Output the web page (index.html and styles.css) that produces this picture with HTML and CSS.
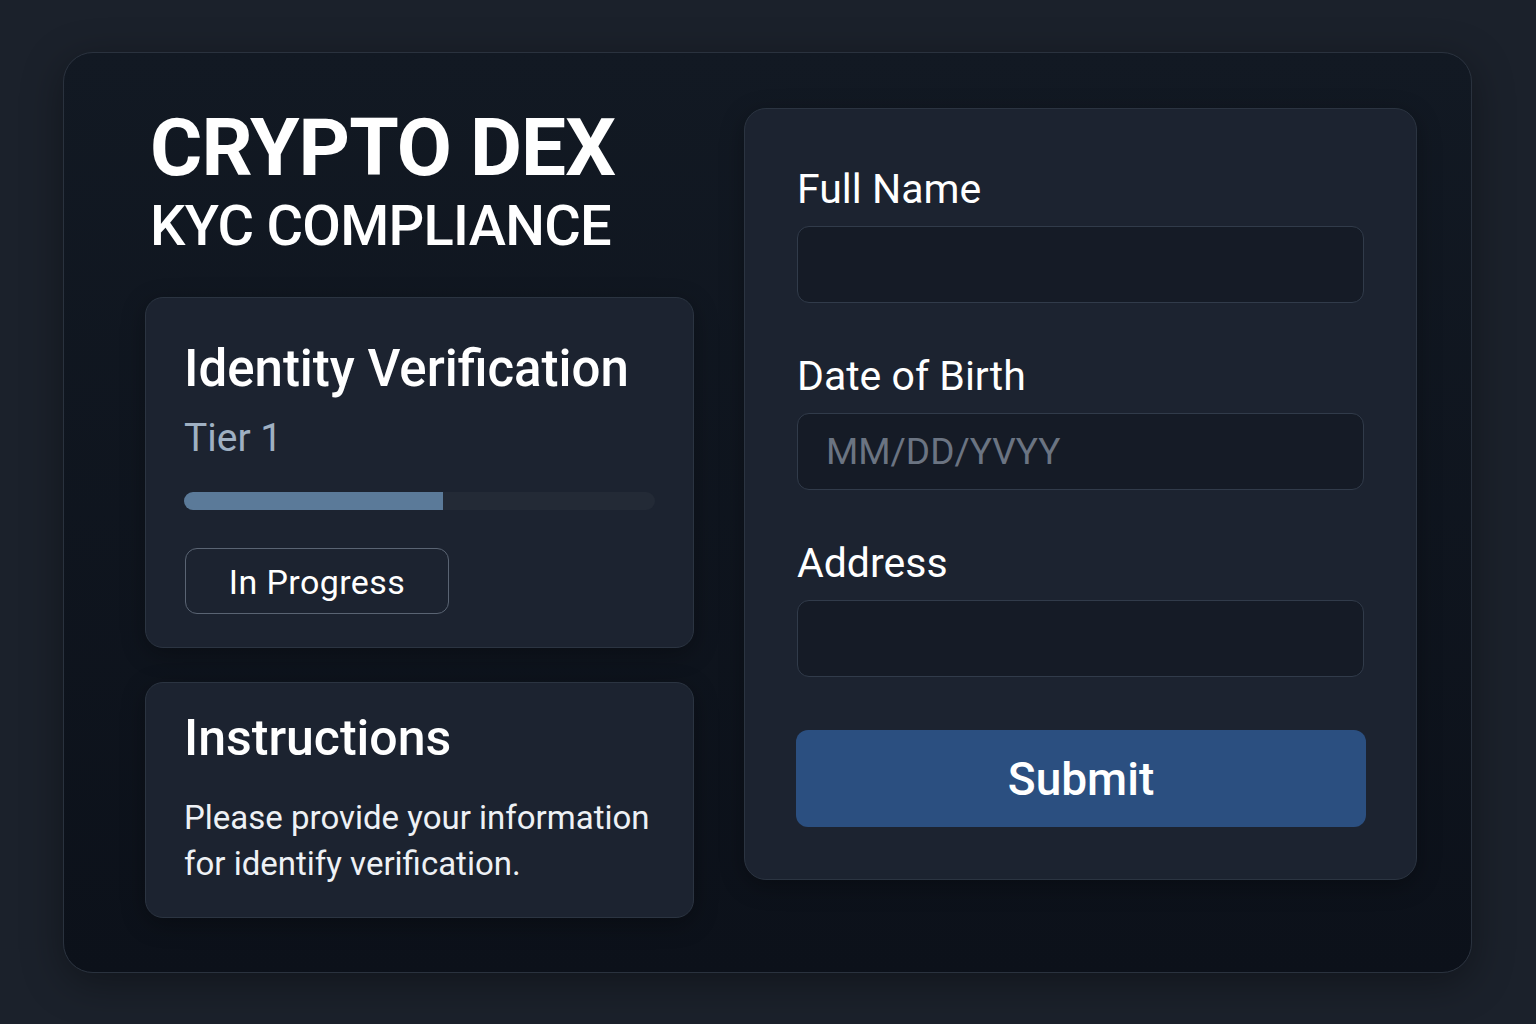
FILE: index.html
```html
<!DOCTYPE html>
<html lang="en">
<head>
  <meta charset="UTF-8" />
  <title>Crypto DEX - KYC Compliance</title>
  <link rel="stylesheet" href="styles.css">
</head>
<body>

  <div class="shell">
    <!-- Left column: brand + status cards -->
    <div class="side">
      <div class="brand">
        <h1>CRYPTO DEX</h1>
        <h2>KYC COMPLIANCE</h2>
      </div>

      <div class="card status-card">
        <h3>Identity Verification</h3>
        <p class="tier">Tier 1</p>
        <div class="progress">
          <div class="progress-fill" style="width: 55%"></div>
        </div>
        <span class="badge">In Progress</span>
      </div>

      <div class="card info-card">
        <h3>Instructions</h3>
        <p>Please provide your information for identify verification.</p>
      </div>
    </div>

    <!-- Right column: form -->
    <form class="card kyc-form" id="kycForm">
      <div class="form-group">
        <label for="fullname">Full Name</label>
        <input type="text" id="fullname" />
      </div>

      <div class="form-group">
        <label for="dob">Date of Birth</label>
        <input type="text" id="dob" placeholder="MM/DD/YVYY" />
      </div>

      <div class="form-group">
        <label for="address">Address</label>
        <input type="text" id="address" />
      </div>

      <button type="submit">Submit</button>
    </form>
  </div>

  <script>
    document.getElementById('kycForm').addEventListener('submit', function(e) {
      e.preventDefault();
    });
  </script>

</body>
</html>
```

FILE: styles.css
```css
body {
  margin: 0;
  font-family: Roboto, 'Noto Sans', sans-serif;
  background: #1b212b;
  color: #fff;
  height: 100vh;
  padding: 52px 64px 0 63px;
  box-sizing: border-box;
}

.shell {
  display: flex;
  gap: 50px;
  height: 921px;
  box-sizing: border-box;
  padding: 48px 54px 0 82px;
  background: linear-gradient(180deg, #121923 0%, #0c111a 100%);
  border: 1px solid #2a323e;
  border-radius: 30px;
  box-shadow: 0 10px 40px rgba(0, 0, 0, 0.35);
}

.side {
  width: 549px;
  display: flex;
  flex-direction: column;
}

.brand {
  padding-left: 4px;
  margin-bottom: 40px;
}

h1 {
  margin: 0;
  font-size: 80px;
  font-weight: 700;
  line-height: 94px;
  letter-spacing: -0.9px;
}

h2 {
  margin: 0;
  font-size: 56px;
  font-weight: 500;
  line-height: 62px;
  letter-spacing: -0.7px;
}

.card {
  background: #1c2330;
  border: 1px solid #2b3441;
  border-radius: 18px;
  box-sizing: border-box;
  box-shadow: 0 6px 24px rgba(0, 0, 0, 0.3);
}

.card h3 {
  margin: 0;
  font-size: 51px;
  font-weight: 500;
}

.status-card {
  height: 351px;
  padding: 38px 38px 0;
  margin-left: -1px;
}

.status-card h3 {
  line-height: 66px;
}

.tier {
  margin: 11px 0 0;
  font-size: 39px;
  font-weight: 400;
  color: #9fb0c2;
  line-height: 50px;
}

.progress {
  margin-top: 29px;
  height: 18px;
  background: #232a36;
  border-radius: 9px;
  overflow: hidden;
}

.progress-fill {
  height: 100%;
  background: #5b7a99;
}

.badge {
  display: inline-block;
  margin-top: 38px;
  margin-left: 1px;
  width: 264px;
  height: 66px;
  box-sizing: border-box;
  text-align: center;
  line-height: 66px;
  border: 1.5px solid #5a6473;
  border-radius: 12px;
  font-size: 34px;
  letter-spacing: 0.4px;
}

.info-card {
  margin-top: 34px;
  margin-left: -1px;
  height: 236px;
  padding: 24px 38px 0;
}

.info-card h3 {
  font-size: 50px;
  line-height: 62px;
}

.info-card p {
  margin: 26px 0 0;
  font-size: 33px;
  line-height: 46px;
  color: #eef1f5;
}

.kyc-form {
  width: 673px;
  height: 772px;
  margin-top: 7px;
  border-radius: 22px;
  padding: 50px 52px 0;
  display: flex;
  flex-direction: column;
}

.form-group {
  margin-bottom: 43px;
}

.form-group label {
  display: block;
  font-size: 41px;
  font-weight: 400;
  line-height: 60px;
  margin-bottom: 7px;
}

.form-group input {
  width: 100%;
  height: 77px;
  box-sizing: border-box;
  background: #151b26;
  border: 1.5px solid #313b4a;
  border-radius: 12px;
  padding: 0 28px;
  font-family: inherit;
  font-size: 37px;
  color: #fff;
}

.form-group input::placeholder {
  color: #6b7482;
}

.form-group input:focus {
  outline: none;
  border-color: #4a6a95;
}

button {
  margin-top: 10px;
  margin-left: -1px;
  width: 570px;
  height: 97px;
  background: #2b4f80;
  color: #fff;
  border: none;
  border-radius: 12px;
  font-family: inherit;
  font-size: 46px;
  font-weight: 500;
  cursor: pointer;
}
```
